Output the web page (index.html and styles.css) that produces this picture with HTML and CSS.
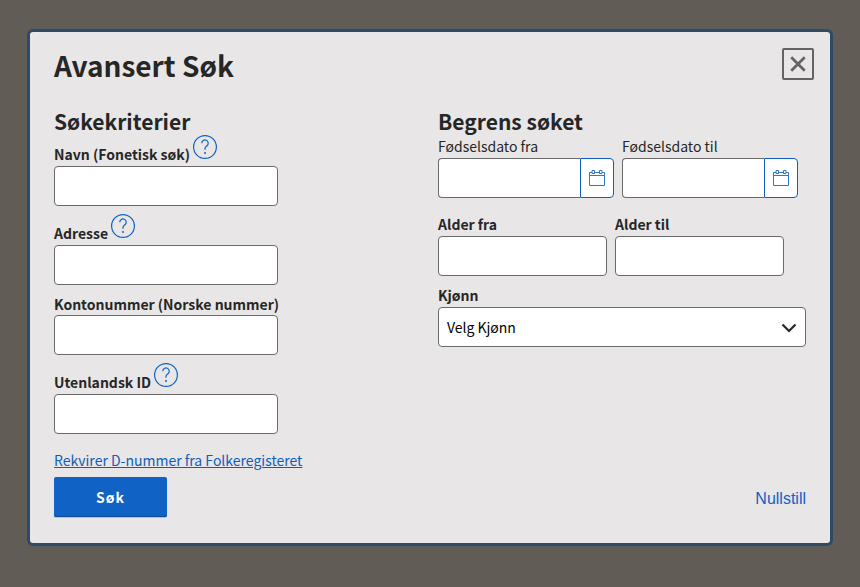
FILE: index.html
```html
<!DOCTYPE html>
<html lang="nb">
<head>
<meta charset="utf-8">
<meta name="viewport" content="width=device-width, initial-scale=1">
<title>Avansert Søk</title>
<link rel="stylesheet" href="styles.css">
</head>
<body>
<svg class="sprite" aria-hidden="true">
  <symbol id="help" viewBox="0 0 24 24">
    <circle cx="12" cy="12" r="11.4"/>
    <path d="M8.8 8.2a3.2 3.2 0 1 1 5.2 2.5c-1.100.9-2 1.400-2 2.800v1.200"/>
    <circle class="dot" cx="12" cy="18" r="1"/>
  </symbol>
  <symbol id="calendar" viewBox="0 0 16 16">
    <path d="M3 2.500H.5v13h15v-13H13M5.500 2.500h5M.5 5.500h15M3 .5h2.500v3H3zM10.500.5H13v3h-2.500z"/>
  </symbol>
</svg>
<main class="modal" role="dialog" aria-labelledby="title">
  <button class="close" type="button" aria-label="Lukk">
    <svg viewBox="0 0 16 16"><path d="M2 2l12 12M14 2L2 14"/></svg>
  </button>
  <h1 id="title">Avansert Søk</h1>
  <form>
    <div class="columns">
      <section>
        <h2>Søkekriterier</h2>
        <div class="field">
          <div class="label-row">
            <label for="navn">Navn (Fonetisk søk)</label>
            <button class="help" type="button" aria-label="Hjelp om navn"><svg><use href="#help"/></svg></button>
          </div>
          <input class="text" id="navn" type="text">
        </div>
        <div class="field">
          <div class="label-row">
            <label for="adresse">Adresse</label>
            <button class="help" type="button" aria-label="Hjelp om adresse"><svg><use href="#help"/></svg></button>
          </div>
          <input class="text" id="adresse" type="text">
        </div>
        <div class="field">
          <label for="konto">Kontonummer (Norske nummer)</label>
          <input class="text" id="konto" type="text">
        </div>
        <div class="field">
          <div class="label-row">
            <label for="utenlandsk">Utenlandsk ID</label>
            <button class="help" type="button" aria-label="Hjelp om utenlandsk ID"><svg><use href="#help"/></svg></button>
          </div>
          <input class="text" id="utenlandsk" type="text">
        </div>
        <a class="request" href="#">Rekvirer D-nummer fra Folkeregisteret</a>
      </section>
      <section class="limits">
        <h2>Begrens søket</h2>
        <div class="pair">
          <div class="date-field">
            <label class="light" for="dato-fra">Fødselsdato fra</label>
            <div class="date">
              <input id="dato-fra" type="text">
              <button type="button" aria-label="Velg dato fra"><svg><use href="#calendar"/></svg></button>
            </div>
          </div>
          <div class="date-field">
            <label class="light" for="dato-til">Fødselsdato til</label>
            <div class="date">
              <input id="dato-til" type="text">
              <button type="button" aria-label="Velg dato til"><svg><use href="#calendar"/></svg></button>
            </div>
          </div>
        </div>
        <div class="pair ages">
          <div class="age-field">
            <label for="alder-fra">Alder fra</label>
            <input id="alder-fra" type="text">
          </div>
          <div class="age-field">
            <label for="alder-til">Alder til</label>
            <input id="alder-til" type="text">
          </div>
        </div>
        <label for="kjonn">Kjønn</label>
        <div class="select">
          <select id="kjonn">
            <option>Velg Kjønn</option>
            <option>Kvinne</option>
            <option>Mann</option>
          </select>
          <svg viewBox="0 0 16 10"><path d="M1.500 1.500L8 8l6.500-6.500"/></svg>
        </div>
      </section>
    </div>
    <div class="actions">
      <button class="submit" type="submit">Søk</button>
      <button class="reset" type="reset">Nullstill</button>
    </div>
  </form>
</main>
</body>
</html>
```
FILE: styles.css
```css
* {
  box-sizing: border-box;
}

body {
  margin: 0;
  padding: 29px 27px;
  background: #615c55;
  color: #262626;
  font: 14px/22px "Noto Sans CJK JP", "Noto Sans", sans-serif;
}

button,
input,
select {
  margin: 0;
  font: inherit;
}

button {
  padding: 0;
  cursor: pointer;
}

svg {
  display: block;
  fill: none;
}

.sprite {
  position: absolute;
  width: 0;
  height: 0;
}

.modal {
  position: relative;
  padding: 16px 24px 26px;
  border: 3px solid #2d4a66;
  border-radius: 6px;
  background: #e8e6e7;
}

.close {
  position: absolute;
  top: 16px;
  right: 16px;
  display: grid;
  place-items: center;
  width: 32px;
  height: 32px;
  border: 2px solid #656363;
  border-radius: 2px;
  background: transparent;
}

.close svg {
  width: 18px;
  height: 18px;
  stroke: #656363;
  stroke-width: 2.500;
}

h1 {
  margin: 0 0 25px;
  font-size: 28px;
  line-height: 34px;
}

h2 {
  margin: 0;
  font-size: 21px;
  line-height: 28px;
}

.columns {
  display: grid;
  grid-template-columns: 1fr 1fr;
  gap: 16px;
}

label {
  display: block;
  font-weight: 700;
}

label.light {
  font-weight: 400;
}

.limits label,
.label-row label {
  padding-bottom: 1px;
}

input,
select {
  display: block;
  width: 100%;
  height: 40px;
  padding: 0 8px;
  border: 1px solid #6a6a6a;
  border-radius: 4px;
  background: #fff;
  color: #000;
}

.field {
  margin-bottom: 8px;
}

.label-row {
  display: flex;
  align-items: flex-end;
  gap: 3px;
  height: 31px;
}

.help {
  align-self: flex-start;
  border: 0;
  background: transparent;
}

.help svg {
  width: 24px;
  height: 24px;
  stroke: #1062c4;
  stroke-width: 1.200;
}

.dot {
  fill: #1062c4;
  stroke: none;
}

.text {
  width: 224px;
}

.request {
  display: inline-block;
  margin-top: 7px;
  color: #0f5fb8;
}

.pair {
  display: flex;
  gap: 8px;
  margin-bottom: 15px;
}

.pair.ages {
  margin-bottom: 8px;
}

.date-field {
  width: 176px;
}

.age-field {
  width: 169px;
}

.date {
  display: flex;
}

.date input {
  flex: 1;
  min-width: 0;
  border-right: 0;
  border-radius: 4px 0 0 4px;
}

.date button {
  display: grid;
  place-items: center;
  width: 34px;
  border: 1px solid #0f5fb8;
  border-radius: 0 4px 4px 0;
  background: #fff;
}

.date svg {
  width: 16px;
  height: 16px;
  stroke: #2f78c8;
}

.select {
  position: relative;
}

select {
  appearance: none;
}

.select svg {
  position: absolute;
  top: 16px;
  right: 9px;
  width: 16px;
  height: 10px;
  stroke: #262626;
  stroke-width: 2.200;
  pointer-events: none;
}

.actions {
  display: flex;
  align-items: center;
  justify-content: space-between;
  margin-top: 6px;
}

.submit {
  width: 113px;
  height: 40px;
  border: 0;
  border-radius: 2px;
  background: #1062c4;
  box-shadow: inset 0 -1px #0b4d9c, 0 1px #b4c4da;
  color: #fff;
  font-weight: 700;
  letter-spacing: 1px;
}

.reset {
  padding-top: 4px;
  border: 0;
  background: transparent;
  color: #1062c4;
  font: 16px/20px "Liberation Sans", sans-serif;
}
```
